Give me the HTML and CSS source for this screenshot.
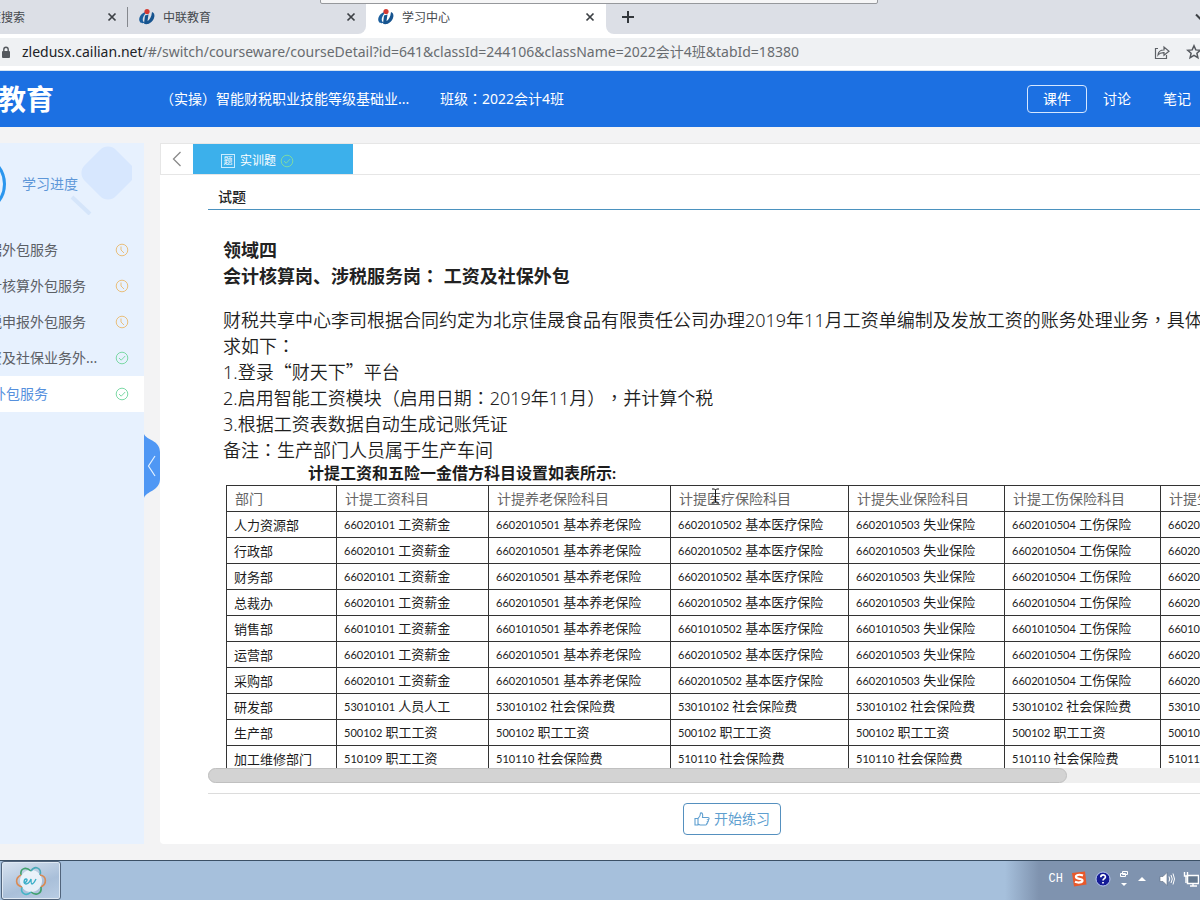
FILE: index.html
```html
<!DOCTYPE html>
<html lang="zh-CN">
<head>
<meta charset="utf-8">
<title>学习中心</title>
<link rel="stylesheet" href="styles.css">
</head>
<body>
<svg class="defs" aria-hidden="true">
  <symbol id="favicon" viewBox="0 0 18 18">
    <path d="M7 4C2 6 0 11 2 14c1 1.500 3 1.500 5 .5C4 14 4 10 7 6z" fill="#1c5f9e"/>
    <path d="M7 7.500l3.500-1-1 6.500c2-1 4-4 4.500-9C18 5 17 12 12 15c-2 1.500-5 1.500-6 .5z" fill="#17548f"/>
    <circle cx="9" cy="3.500" r="2.600" fill="#d33a32"/>
  </symbol>
  <symbol id="cross" viewBox="0 0 10 10"><path d="M1.500 1.500l7 7M8.500 1.500l-7 7" stroke="#3c4045" stroke-width="1.700"/></symbol>
  <symbol id="clock" viewBox="0 0 14 14" fill="none" stroke="#e9bf7c"><circle cx="7" cy="7" r="5.800"/><path d="M6 3.500v3.500l3 3"/></symbol>
  <symbol id="done" viewBox="0 0 14 14" fill="none" stroke="#7cd9a6"><circle cx="7" cy="7" r="5.800"/><path d="M4 7l2.200 2.200L10.200 5"/></symbol>
</svg>

<div class="screen">
  <div class="tabstrip">
    <div class="notch"></div>
    <div class="tab tab-first"><span class="tab-title">度搜索</span><button class="close" aria-label="关闭"><svg><use href="#cross"/></svg></button></div>
    <div class="tab tab-second"><svg class="fav"><use href="#favicon"/></svg><span class="tab-title">中联教育</span><button class="close" aria-label="关闭"><svg><use href="#cross"/></svg></button></div>
    <div class="tab tab-active"><svg class="fav"><use href="#favicon"/></svg><span class="tab-title">学习中心</span><button class="close" aria-label="关闭"><svg><use href="#cross"/></svg></button></div>
    <div class="strip-rest">
      <button class="plus" aria-label="新标签页"><svg viewBox="0 0 14 14"><path d="M7 1v12M1 7h12" stroke="#33373c" stroke-width="2"/></svg></button>
      <svg class="chevron" viewBox="0 0 12 12"><path d="M1 3.500l5 5 5-5" fill="none" stroke="#3c4045" stroke-width="2"/></svg>
    </div>
  </div>

  <div class="toolbar">
    <div class="address">
      <svg class="lock" viewBox="0 0 10 13"><rect x="1" y="5" width="8" height="7" rx="1" fill="#55595e"/><path d="M2.800 5.500V3.500a2.200 2.200 0 0 1 4.400 0v2" fill="none" stroke="#55595e" stroke-width="1.400"/></svg>
      <span class="url"><b>zledusx.cailian.net</b>/#/switch/courseware/courseDetail?id=641&amp;classId=244106&amp;className=2022会计4班&amp;tabId=18380</span>
      <svg class="share" viewBox="0 0 16 16" fill="none" stroke="#5d6166" stroke-width="1.200"><path d="M4 4.500H1.500v10h11V11"/><path d="M4 11c.3-3.500 2.500-5 6-5V3l5 4.200-5 4V8.700C7.500 8.600 5.500 9 4 11z"/></svg>
      <svg class="star" viewBox="0 0 16 16"><path d="M8 1.800l1.800 4.100 4.500.4-3.400 3 1 4.400L8 11.400l-3.900 2.300 1-4.400-3.400-3 4.500-.4z" fill="none" stroke="#55595e" stroke-width="1.500"/></svg>
    </div>
  </div>

  <header class="site-header">
    <div class="logo">教育</div>
    <div class="course">（实操）智能财税职业技能等级基础业...</div>
    <div class="class-name">班级<span class="mid" lang="zh-TW">：</span>2022会计4班</div>
    <nav class="site-nav">
      <button class="nav-item current">课件</button>
      <button class="nav-item">讨论</button>
      <button class="nav-item">笔记</button>
    </nav>
  </header>

  <div class="workspace">
    <aside class="sidebar">
      <div class="progress">
        <svg class="diamond" viewBox="0 0 66 72"><rect x="20" y="8" width="44" height="44" rx="11" transform="rotate(45 42 30)" fill="#d7e7fe"/><path d="M6 54l18 17" stroke="#d5e5fa" stroke-width="4"/></svg>
        <div class="ring"></div>
        <span class="progress-label">学习进度</span>
      </div>
      <ul class="lessons">
        <li><a href="#l1">据外包服务</a><svg><use href="#clock"/></svg></li>
        <li><a href="#l2">计核算外包服务</a><svg><use href="#clock"/></svg></li>
        <li><a href="#l3">税申报外包服务</a><svg><use href="#clock"/></svg></li>
        <li><a href="#l4">资及社保业务外...</a><svg><use href="#done"/></svg></li>
        <li class="selected"><a href="#l5">外包服务</a><svg><use href="#done"/></svg></li>
      </ul>
      <button class="collapse" aria-label="收起"><svg viewBox="0 0 16 64"><path d="M0 0C2 6 16 6 16 18V45C16 57 2 57 0 64z" fill="#4f97f4"/><path d="M11 22L4.500 32 11 42" fill="none" stroke="#e4f1ff" stroke-width="1.200"/></svg></button>
    </aside>

    <main class="panel">
      <div class="panel-tabs">
        <button class="back" aria-label="返回"><svg viewBox="0 0 10 16"><path d="M8.500 1L1.500 8l7 7" fill="none" stroke="#8a8a8a" stroke-width="1.300"/></svg></button>
        <button class="panel-tab"><span class="badge">题</span>实训题<svg><use href="#done"/></svg></button>
      </div>
      <div class="body">
        <h1 class="section-title">试题</h1>
        <div class="viewport">
          <div class="question">
            <h2>领域四<br>会计核算岗、涉税服务岗<span class="mid" lang="zh-TW">：</span> 工资及社保外包</h2>
            <p>财税共享中心李司根据合同约定为北京佳晟食品有限责任公司办理2019年11月工资单编制及发放工资的账务处理业务<span class="mid" lang="zh-TW">，</span>具体要<br>求如下<span class="mid" lang="zh-TW">：</span><br>1.登录<span class="quote">“</span>财天下<span class="quote">”</span>平台<br>2.启用智能工资模块（启用日期<span class="mid" lang="zh-TW">：</span>2019年11月）<span class="mid" lang="zh-TW">，</span>并计算个税<br>3.根据工资表数据自动生成记账凭证<br>备注<span class="mid" lang="zh-TW">：</span>生产部门人员属于生产车间</p>
          </div>
          <table class="accounts">
            <caption>计提工资和五险一金借方科目设置如表所示:</caption>
            <colgroup><col class="c-dept"><col class="c-wage"><col class="c-pension"><col class="c-medical"><col class="c-other"><col class="c-other"><col class="c-other"></colgroup>
            <thead><tr><th>部门</th><th>计提工资科目</th><th>计提养老保险科目</th><th>计提医疗保险科目</th><th>计提失业保险科目</th><th>计提工伤保险科目</th><th>计提生育保险科目</th></tr></thead>
            <tbody>
              <tr><td>人力资源部</td><td><i>66020101</i> 工资薪金</td><td><i>6602010501</i> 基本养老保险</td><td><i>6602010502</i> 基本医疗保险</td><td><i>6602010503</i> 失业保险</td><td><i>6602010504</i> 工伤保险</td><td><i>6602010505</i> 生育保险</td></tr>
              <tr><td>行政部</td><td><i>66020101</i> 工资薪金</td><td><i>6602010501</i> 基本养老保险</td><td><i>6602010502</i> 基本医疗保险</td><td><i>6602010503</i> 失业保险</td><td><i>6602010504</i> 工伤保险</td><td><i>6602010505</i> 生育保险</td></tr>
              <tr><td>财务部</td><td><i>66020101</i> 工资薪金</td><td><i>6602010501</i> 基本养老保险</td><td><i>6602010502</i> 基本医疗保险</td><td><i>6602010503</i> 失业保险</td><td><i>6602010504</i> 工伤保险</td><td><i>6602010505</i> 生育保险</td></tr>
              <tr><td>总裁办</td><td><i>66020101</i> 工资薪金</td><td><i>6602010501</i> 基本养老保险</td><td><i>6602010502</i> 基本医疗保险</td><td><i>6602010503</i> 失业保险</td><td><i>6602010504</i> 工伤保险</td><td><i>6602010505</i> 生育保险</td></tr>
              <tr><td>销售部</td><td><i>66010101</i> 工资薪金</td><td><i>6601010501</i> 基本养老保险</td><td><i>6601010502</i> 基本医疗保险</td><td><i>6601010503</i> 失业保险</td><td><i>6601010504</i> 工伤保险</td><td><i>6601010505</i> 生育保险</td></tr>
              <tr><td>运营部</td><td><i>66020101</i> 工资薪金</td><td><i>6602010501</i> 基本养老保险</td><td><i>6602010502</i> 基本医疗保险</td><td><i>6602010503</i> 失业保险</td><td><i>6602010504</i> 工伤保险</td><td><i>6602010505</i> 生育保险</td></tr>
              <tr><td>采购部</td><td><i>66020101</i> 工资薪金</td><td><i>6602010501</i> 基本养老保险</td><td><i>6602010502</i> 基本医疗保险</td><td><i>6602010503</i> 失业保险</td><td><i>6602010504</i> 工伤保险</td><td><i>6602010505</i> 生育保险</td></tr>
              <tr><td>研发部</td><td><i>53010101</i> 人员人工</td><td><i>53010102</i> 社会保险费</td><td><i>53010102</i> 社会保险费</td><td><i>53010102</i> 社会保险费</td><td><i>53010102</i> 社会保险费</td><td><i>53010102</i> 社会保险费</td></tr>
              <tr><td>生产部</td><td><i>500102</i> 职工工资</td><td><i>500102</i> 职工工资</td><td><i>500102</i> 职工工资</td><td><i>500102</i> 职工工资</td><td><i>500102</i> 职工工资</td><td><i>500102</i> 职工工资</td></tr>
              <tr><td>加工维修部门</td><td><i>510109</i> 职工工资</td><td><i>510110</i> 社会保险费</td><td><i>510110</i> 社会保险费</td><td><i>510110</i> 社会保险费</td><td><i>510110</i> 社会保险费</td><td><i>510110</i> 社会保险费</td></tr>
            </tbody>
          </table>
        </div>
        <div class="scrollbar"><div class="thumb"></div></div>
        <div class="actions">
          <button class="start"><svg viewBox="0 0 16 16" fill="none" stroke="#5f9fd0" stroke-width="1.100"><path d="M1 7.500h3V14H1zM4 7.500C6 6 6.500 4 6.500 2c1.800-.6 2.600 1 2 4.500H14c1.500 0 1.500 2 0 2.200.8.500.5 1.900-.5 2 .5.600.2 1.600-.7 1.700.2.900-.2 1.600-1.200 1.600H6L4 13"/></svg>开始练习</button>
        </div>
      </div>
    </main>
  </div>

  <footer class="taskbar">
    <button class="app" aria-label="EV">
      <svg viewBox="0 0 32 32" fill="none" stroke-width="1.600">
        <circle cx="16" cy="16" r="11" fill="#f6fbff" fill-opacity=".8"/>
        <path d="M6 10C5 4 10 1 16 6" stroke="#3fa06c"/><path d="M16 6c4-6 11-3 9 4" stroke="#4aa9b8"/>
        <path d="M25 10c7 1 7 9 1 12" stroke="#d98a54"/><path d="M26 22c1 7-5 9-10 5" stroke="#3fa06c"/>
        <path d="M16 27c-5 5-11 1-9-5" stroke="#45b5c6"/><path d="M7 22c-7-2-7-9-1-12" stroke="#d98a54"/>
        <path d="M9 18c3-1 4-4 2-4s-3 5 0 5 4-3 5-5c0 3 0 5 1 5s3-3 4-5" stroke="#39aec8" stroke-width="1.400"/>
      </svg>
    </button>
    <div class="tray">
      <span class="ime">CH</span>
      <svg class="i16" viewBox="0 0 16 16"><path d="M1 2l13-1.500 1.500 13L3 15.500z" fill="#e8592b"/><path d="M12 4.500C8 3 4.500 4 5 6.200s6.500 1 6.500 3.300S7 12 4 10.800" fill="none" stroke="#fff" stroke-width="2.200"/></svg>
      <svg class="i16" viewBox="0 0 16 16"><circle cx="8" cy="8" r="7" fill="#151c96" stroke="#b9c8ef"/><path d="M5.800 6.200c0-3 4.600-3 4.600-.3C10.400 7.700 8 7.500 8 9.600M8 11v1.600" fill="none" stroke="#fff" stroke-width="1.700"/></svg>
      <svg class="lang" viewBox="0 0 10 18"><path d="M3.500 1.500h5v3h-5zM1.500 3.500h5v3h-5z" fill="#8598b3" stroke="#fff"/><path d="M2 13h6l-3 3z" fill="#fff"/></svg>
      <svg class="up" viewBox="0 0 10 6"><path d="M1 5l4-4 4 4z" fill="#fff"/></svg>
      <svg class="i16" viewBox="0 0 16 16"><path d="M1 5.500h3l4-4v13l-4-4H1z" fill="#fff" stroke="#5c6b80" stroke-width=".6"/><path d="M10 5.500q1.500 2.500 0 5M12 4q2.500 4 0 8M14 2.500q3 5.500 0 11" fill="none" stroke="#fff"/></svg>
      <svg class="i16" viewBox="0 0 16 16"><rect x="4.500" y="4.500" width="11" height="8" fill="#64788f" stroke="#fff" stroke-width="1.500"/><path d="M7 15h7M10 13v2M1.500 1v4h3V1M3 5v7" fill="none" stroke="#fff" stroke-width="1.400"/></svg>
    </div>
  </footer>
  <svg class="caret" viewBox="0 0 9 16"><path d="M1 1h2.500l1 1 1-1H8M4.500 2v12M1 15h2.500l1-1 1 1H8" fill="none" stroke="#111"/></svg>
</div>
</body>
</html>
```
FILE: styles.css
```css
* { box-sizing: border-box; }

body {
  margin: 0;
  overflow: hidden;
  background: #f3f3f4;
  color: #222;
  font: 14px/20px "Noto Sans", "Noto Sans CJK SC", sans-serif;
  text-spacing-trim: space-all;
}

button {
  margin: 0;
  padding: 0;
  border: 0;
  background: none;
  color: inherit;
  font: inherit;
}

a { color: inherit; text-decoration: none; }
svg { display: block; flex: none; }
.defs { position: absolute; width: 0; height: 0; }
.mid { font-family: "Noto Sans CJK TC", sans-serif; line-height: 1; }
.quote { font-family: "Noto Sans CJK SC", sans-serif; line-height: 1; }

.screen {
  position: relative;
  display: flex;
  flex-direction: column;
  height: 100vh;
}

/* Browser tabs */
.tabstrip {
  position: relative;
  display: flex;
  flex: none;
  height: 34px;
  background: #fff;
  color: #44484d;
  font-size: 12px;
}
.notch {
  position: absolute;
  top: -4px;
  left: 320px;
  width: 558px;
  height: 8px;
  border: 1px solid #96989c;
  border-radius: 2px;
  background: #f6f6f7;
}
.tab { display: flex; align-items: center; background: #dcdfe6; }
.tab-title { padding-top: 1px; }
.tab-first { position: relative; width: 128px; padding-right: 11px; }
.tab-first .tab-title { margin-left: -11px; }
.tab-first::after {
  content: "";
  position: absolute;
  right: 0;
  width: 1px;
  height: 20px;
  background: #85888e;
}
.tab-second { width: 238px; padding: 0 10px; border-radius: 0 0 8px 0; }
.tab-active { width: 240px; padding: 0 11px; background: #fff; }
.fav { width: 18px; height: 18px; margin-right: 7px; }
.close { margin-left: auto; }
.close svg { width: 10px; height: 10px; }
.strip-rest {
  display: flex;
  flex: 1;
  align-items: center;
  justify-content: space-between;
  margin-right: -7px;
  padding-left: 15px;
  border-radius: 0 0 0 8px;
  background: #dcdfe6;
}
.plus svg { width: 14px; height: 14px; }
.chevron { width: 12px; height: 12px; }

.toolbar { flex: none; padding: 4px 0; background: #fff; border-bottom: 1px solid #d5e4f2; }
.address {
  display: flex;
  align-items: center;
  height: 28px;
  margin-right: -1px;
  background: #eff1f3;
}
.lock { width: 10px; height: 13px; margin: 0 11px 0 1px; }
.url { flex: 1; color: #686c70; font-size: 14px; white-space: nowrap; }
.url b { color: #202226; font-weight: 400; }
.share { width: 16px; height: 16px; margin-right: 16px; }
.star { width: 16px; height: 16px; margin-right: -1px; }

/* Site header */
.site-header {
  display: flex;
  flex: none;
  align-items: center;
  height: 56px;
  background: #1c70e2;
  color: #fff;
}
.logo { width: 162px; margin-left: -2px; font-size: 28px; font-weight: 700; line-height: 56px; }
.course { width: 280px; }
.site-nav { display: flex; margin: 0 -7px 0 auto; }
.nav-item { width: 60px; height: 28px; border: 1px solid transparent; border-radius: 4px; }
.current { border-color: #d6e7ff; }

/* Sidebar */
.workspace { display: flex; flex: 1; gap: 16px; min-height: 0; padding: 16px 0; }
.sidebar { position: relative; flex: none; width: 144px; background: #e7f1fe; }
.progress { position: relative; display: flex; align-items: center; height: 82px; }
.ring {
  position: relative;
  width: 60px;
  height: 60px;
  margin-left: -54px;
  border: 3px solid #2b96ee;
  border-radius: 50%;
}
.diamond { position: absolute; top: 0; left: 66px; width: 66px; height: 72px; }
.progress-label { position: relative; margin-left: 16px; color: #5e97d8; }
.lessons { margin: 7px 0 0; padding: 0; list-style: none; color: #5c6066; }
.lessons li { display: flex; align-items: center; height: 36px; padding-right: 15px; }
.lessons a { flex: 1; margin-left: -12px; white-space: nowrap; }
.lessons svg { width: 14px; height: 14px; }
.lessons .selected { background: #fff; color: #5690dd; }
.lessons .selected a { margin-left: -8px; }
.collapse { position: absolute; top: 291px; left: 100%; }
.collapse svg { width: 16px; height: 64px; }

/* Question panel */
.panel {
  display: flex;
  flex: 1;
  flex-direction: column;
  min-width: 0;
  margin-right: -56px;
  border-radius: 4px;
  background: #fff;
}
.panel-tabs { display: flex; flex: none; height: 32px; border: 1px solid #e6e6e6; }
.back { display: grid; place-items: center; width: 32px; }
.back svg { width: 10px; height: 16px; }
.panel-tab {
  display: flex;
  align-items: center;
  width: 160px;
  padding: 3px 0 0 28px;
  background: #3cb0eb;
  color: #fff;
  font-size: 12px;
}
.badge {
  width: 14px;
  height: 14px;
  margin-right: 5px;
  border: 1px solid #c9ecff;
  font-size: 9px;
  line-height: 12px;
  text-align: center;
}
.panel-tab svg { width: 14px; height: 14px; margin-left: 4px; }
.body { display: flex; flex: 1; flex-direction: column; min-height: 0; padding-left: 48px; }
.section-title {
  flex: none;
  height: 35px;
  margin: 0;
  padding: 12px 10px 0;
  border-bottom: 1px solid #4b92bf;
  font-size: 14px;
  font-weight: 500;
  line-height: 20px;
}
.viewport { flex: 1; min-height: 0; padding: 27px 0 0 15px; overflow: hidden; }
.question { color: #1e1e1e; font-size: 18px; line-height: 26px; white-space: nowrap; }
.question h2 { margin: 0 0 18px; color: #222; font-size: 18px; }
.question p { margin: 0; font-weight: 350; }

.accounts {
  width: 1090px;
  margin-left: 3px;
  border-collapse: collapse;
  table-layout: fixed;
  color: #1c1c1c;
  font-family: Lato, "Noto Sans CJK SC", sans-serif;
  font-size: 13px;
  line-height: 18px;
  white-space: nowrap;
}
.accounts caption {
  padding: 0 0 2px 82px;
  font-size: 16px;
  font-weight: 700;
  line-height: 20px;
  text-align: left;
}
.accounts th, .accounts td { height: 26px; padding: 0 7px; border: 1px solid #333; text-align: left; }
.accounts th { padding-left: 8px; color: #666; font-size: 14px; font-weight: 400; }
.accounts i { font-size: 11px; font-style: normal; }
.c-dept { width: 110px; }
.c-wage { width: 152px; }
.c-pension { width: 182px; }
.c-medical { width: 178px; }
.c-other { width: 156px; }

.scrollbar { flex: none; height: 15px; border-radius: 8px; background: #efefef; }
.thumb {
  width: 82%;
  height: 100%;
  border: 1px solid #c0c0c0;
  border-radius: 8px;
  background: #d3d3d3;
}
.actions {
  display: flex;
  flex: none;
  justify-content: center;
  margin-top: 10px;
  padding: 9px 0;
  border-top: 1px solid #dcdcdc;
}
.start {
  display: flex;
  align-items: center;
  gap: 4px;
  height: 32px;
  padding: 0 10px;
  border: 1px solid #5590bf;
  border-radius: 4px;
  color: #5f9fd0;
}
.start svg { width: 16px; height: 16px; }

/* Taskbar */
.taskbar {
  display: flex;
  flex: none;
  justify-content: space-between;
  height: 40px;
  padding-left: 1px;
  border-top: 1px solid #3b5066;
  background: #a6c0dc;
}
.app {
  display: grid;
  place-items: center;
  width: 60px;
  border: 1px solid #51647c;
  border-radius: 3px;
  background: linear-gradient(160deg, #d8e3f0, #a9bfd9 60%, #b9cde4);
  box-shadow: inset 0 0 0 1px #dfe9f4;
}
.app svg { width: 32px; height: 32px; }
.tray {
  display: flex;
  align-items: center;
  gap: 8px;
  padding: 0 1px 4px 44px;
  background: linear-gradient(90deg, #a6c0dc, #7f93af 34px);
  color: #fff;
}
.ime { font: 12px/16px "Liberation Mono", monospace; }
.i16 { width: 16px; height: 16px; }
.lang { width: 10px; height: 18px; }
.up { width: 10px; height: 6px; margin-right: 4px; }

.caret { position: absolute; top: 488px; left: 711px; width: 9px; height: 16px; }
```
